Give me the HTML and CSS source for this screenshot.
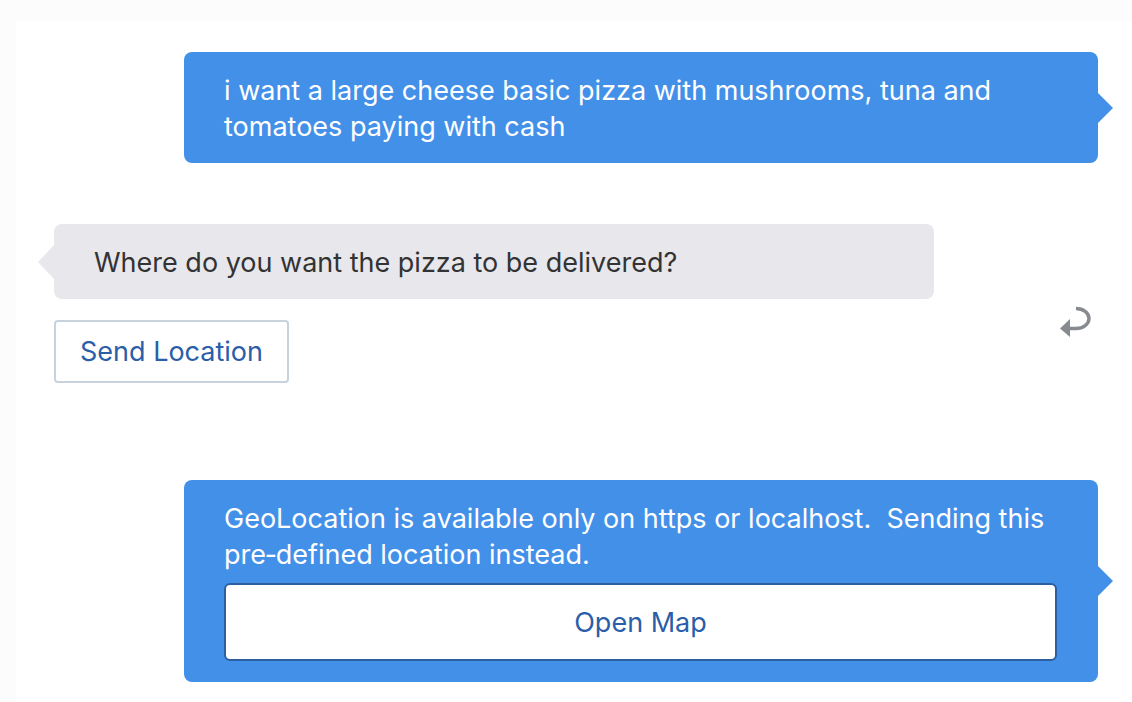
FILE: index.html
```html
<!DOCTYPE html>
<html lang="en">
<head>
<meta charset="utf-8">
<title>Chat</title>
<link rel="stylesheet" href="styles.css">
</head>
<body>
<div class="panel">
  <div class="msg msg-user msg-first">
    <div class="bubble bubble-user">i want a large cheese basic pizza with mushrooms, tuna and tomatoes paying with cash</div>
  </div>
  <div class="msg msg-bot">
    <div class="bubble bubble-bot">Where do you want the pizza to be delivered?</div>
  </div>
  <div class="actions">
    <button class="btn-outline" type="button">Send Location</button>
    <button class="undo" type="button" aria-label="Undo">
      <svg width="32" height="32" viewBox="0 0 32 32">
        <path d="M16 3.5 A13 10 0 0 1 16 23.5 H9" fill="none" stroke="#878b90" stroke-width="3.4"/>
        <path d="M0 23.5 L10 14 L10 32 Z" fill="#878b90"/>
      </svg>
    </button>
  </div>
  <div class="msg msg-user msg-geo">
    <div class="bubble bubble-user">
      <div class="geo-text">GeoLocation is available only on https or localhost.&nbsp; Sending this pre&#8209;defined location instead.</div>
      <button class="btn-map" type="button">Open Map</button>
    </div>
  </div>
</div>
</body>
</html>
```

FILE: styles.css
```css
* { box-sizing: border-box; }
html, body {
  margin: 0;
  padding: 0;
  background: #fcfcfc;
  height: 100%;
}
body {
  font-family: Inter, "Noto Sans", "Liberation Sans", sans-serif;
  font-size: 27px;
  line-height: 36px;
  overflow: hidden;
}
.panel {
  margin: 22px 0 0 16px;
  background: #ffffff;
  min-height: 680px;
  padding-top: 30px;
  display: flex;
  flex-direction: column;
}
.msg {
  display: flex;
}
.msg-user {
  padding-left: 168px;
}
.msg-bot {
  padding-left: 38px;
  margin-top: 61px;
}
.msg-geo {
  margin-top: 97px;
}
.bubble {
  position: relative;
  border-radius: 8px;
  padding: 21px 40px 18px;
}
.bubble-user {
  width: 914px;
  background: #4390e9;
  color: #ffffff;
}
.bubble-user::after {
  content: "";
  position: absolute;
  right: -15px;
  top: 50%;
  margin-top: -15px;
  border-style: solid;
  border-width: 15px 0 15px 15px;
  border-color: transparent transparent transparent #4390e9;
}
.bubble-bot {
  width: 880px;
  background: #e7e7ec;
  color: #333333;
}
.bubble-bot::before {
  content: "";
  position: absolute;
  left: -16px;
  top: 50%;
  margin-top: -17px;
  border-style: solid;
  border-width: 17px 16px 17px 0;
  border-color: transparent #e7e7ec transparent transparent;
}
.actions {
  display: flex;
  align-items: flex-start;
  justify-content: space-between;
  padding-left: 38px;
  padding-right: 40px;
  margin-top: 21px;
}
.btn-outline {
  font: inherit;
  line-height: 36px;
  color: #2a5ea8;
  background: #ffffff;
  border: 2px solid #c8d2dc;
  border-radius: 4px;
  padding: 12px 0 11px;
  width: 235px;
  text-align: center;
  white-space: nowrap;
  cursor: pointer;
}
.undo {
  background: none;
  border: 0;
  padding: 0;
  margin-top: -15px;
  width: 32px;
  height: 32px;
  cursor: pointer;
  display: block;
}
.undo svg { display: block; }
.geo-text {
  margin-bottom: 10px;
}
.btn-map {
  display: block;
  width: 833px;
  height: 78px;
  font: inherit;
  line-height: 36px;
  color: #2a5ea8;
  background: #ffffff;
  border: 2px solid #2c5f9f;
  border-radius: 6px;
  margin-bottom: 3px;
  padding-top: 2px;
  cursor: pointer;
}
```
